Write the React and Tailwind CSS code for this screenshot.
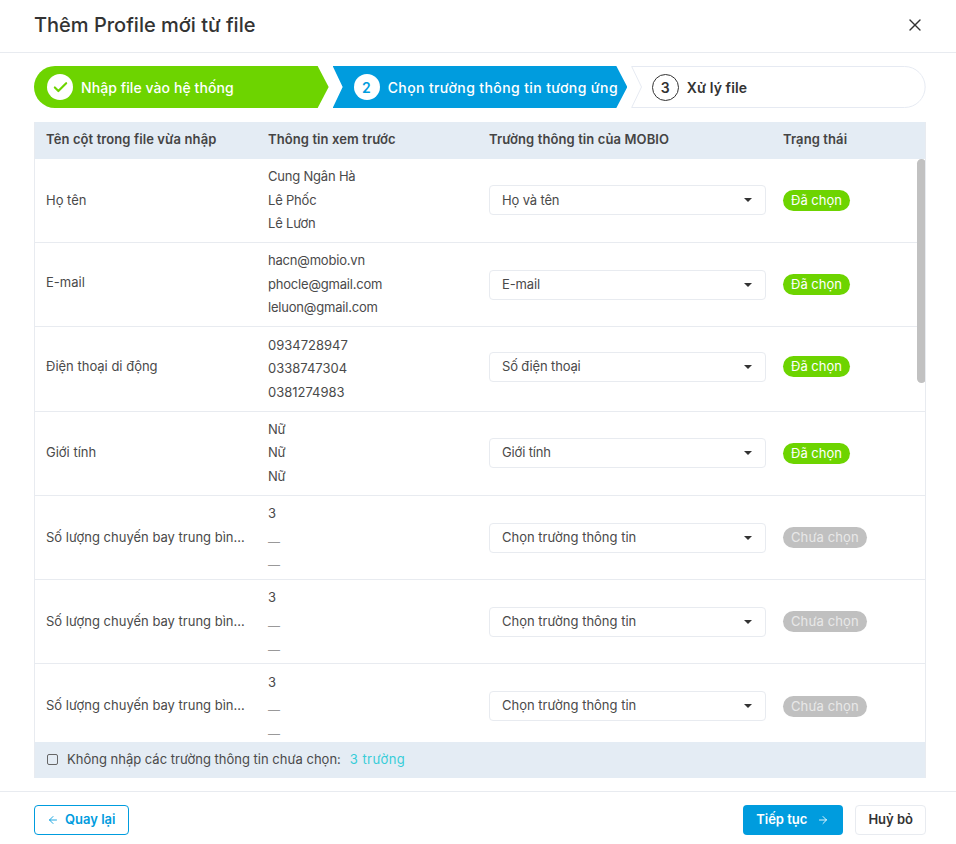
import { ArrowLeft, ArrowRight, Check, X } from 'lucide-react';

const ROWS = [
    { label: 'Họ tên', preview: ['Cung Ngân Hà', 'Lê Phốc', 'Lê Lươn'], field: 'Họ và tên', done: true },
    { label: 'E-mail', preview: ['hacn@mobio.vn', 'phocle@gmail.com', 'leluon@gmail.com'], field: 'E-mail', done: true, labelUp: 'translate-y-[-2px]' },
    { label: 'Điện thoại di động', preview: ['0934728947', '0338747304', '0381274983'], field: 'Số điện thoại', done: true, digits: true, labelUp: 'translate-y-[-2px]', fieldUp: 'translate-y-[-2px]' },
    { label: 'Giới tính', preview: ['Nữ', 'Nữ', 'Nữ'], field: 'Giới tính', done: true },
    { label: 'Số lượng chuyến bay trung bình năm', preview: ['3', '—', '—'], field: 'Chọn trường thông tin', done: false },
    { label: 'Số lượng chuyến bay trung bình quý', preview: ['3', '—', '—'], field: 'Chọn trường thông tin', done: false },
    { label: 'Số lượng chuyến bay trung bình tháng', preview: ['3', '—', '—'], field: 'Chọn trường thông tin', done: false },
];

function StepNumber({ children, outlined }) {
    return (
        <span className={`rounded-full flex items-center justify-center shrink-0 text-[14px] font-semibold ${
            outlined ? 'w-[27px] h-[27px] border border-[#333333] text-[#333333]' : 'w-[26px] h-[26px] bg-white text-[#009cde]'
        }`}>
            {children}
        </span>
    );
}

function Stepper() {
    return (
        <div className="grid grid-cols-3 gap-[4px] h-[42px] text-[14px]">
            <div className="flex items-center gap-[8px] pl-[13px] bg-[#6dd400] text-white font-medium tracking-[0.08px] rounded-l-full [clip-path:polygon(0_0,calc(100%-11px)_0,100%_50%,calc(100%-11px)_100%,0_100%)]">
                <StepNumber><Check size={17} strokeWidth={3} className="text-[#6dd400]" /></StepNumber>
                Nhập file vào hệ thống
            </div>
            <div className="flex items-center gap-[8px] pl-[21px] bg-[#009cde] text-white font-medium whitespace-nowrap tracking-[0.39px] [clip-path:polygon(0_0,calc(100%-11px)_0,100%_50%,calc(100%-11px)_100%,0_100%,10px_50%)]">
                <StepNumber>2</StepNumber>
                Chọn trường thông tin tương ứng
            </div>
            <div className="relative flex items-center gap-[8px] pl-[20.5px] font-semibold tracking-[0.1px] text-[#333333]">
                <svg className="absolute inset-0 w-full h-full" viewBox="0 0 295 42" preserveAspectRatio="none" fill="none">
                    <path d="M0.7 0.5H274a20.5 20.5 0 0 1 0 41H0.7L10.5 21Z" stroke="#e6eaf2" />
                </svg>
                <StepNumber outlined>3</StepNumber>
                Xử lý file
            </div>
        </div>
    );
}

function TableRow({ row }) {
    return (
        <div className="grid grid-cols-[233px_221px_294px_1fr] items-center h-[84.3px] border-b border-[#e8ebf0] text-[13px] text-[#4a4a4a] shrink-0">
            <span className={`pl-[11px] pr-[23px] truncate ${row.labelUp ?? ''}`}>{row.label}</span>
            <div className={`leading-[23.6px] ${row.digits ? '' : 'tracking-[-0.2px]'}`}>
                {row.preview.map((line, i) => (
                    <div key={i} className={line === '—' ? 'translate-y-[4px] text-[12px] text-[#999999]' : ''}>{line}</div>
                ))}
            </div>
            <div className={`flex items-center justify-between w-[277px] h-[30px] pl-[12px] pr-[13px] bg-white border border-[#e8ebf0] rounded-[4px] ${row.done ? 'tracking-[-0.15px]' : ''} ${row.fieldUp ?? ''}`}>
                {row.field}
                <span className="w-0 h-0 border-x-[4px] border-x-transparent border-t-[4px] border-t-[#333333]" />
            </div>
            <div className={row.fieldUp ?? ''}>
                <span className={`inline-block h-[21px] leading-[21px] px-[8px] rounded-full text-[13px] ${
                    row.done ? 'bg-[#6dd400] text-white' : 'bg-[#c0c0c0] text-[#e8e8e8] tracking-[0.1px]'
                }`}>
                    {row.done ? 'Đã chọn' : 'Chưa chọn'}
                </span>
            </div>
        </div>
    );
}

export default function App() {
    return (
        <div className="w-[956px] h-[844px] bg-white flex flex-col font-['Inter',sans-serif] text-[#4a4a4a] overflow-hidden">
            <header className="h-[53px] flex items-center justify-between pl-[34px] pr-[31px] pb-[2px] border-b border-[#e8ebf0] shrink-0">
                <h1 className="text-[20px] font-medium text-[#333333]">Thêm Profile mới từ file</h1>
                <X size={20} strokeWidth={1.6} className="text-[#333333]" />
            </header>

            <main className="flex-1 pl-[34px] pr-[30px] pt-[13px] flex flex-col min-h-0">
                <Stepper />

                <div className="mt-[14px] flex flex-col border-x border-[#e8ebf0]">
                    <div className="grid grid-cols-[233px_221px_294px_1fr] items-center h-[36.7px] pb-[2px] bg-[#e4ecf4] text-[13px] font-semibold tracking-[0.1px] text-[#444444]">
                        <span className="pl-[11px]">Tên cột trong file vừa nhập</span>
                        <span>Thông tin xem trước</span>
                        <span>Trường thông tin của MOBIO</span>
                        <span>Trạng thái</span>
                    </div>

                    <div className="relative h-[583.3px] overflow-hidden flex flex-col">
                        {ROWS.map((row, i) => <TableRow key={i} row={row} />)}
                        <div className="absolute top-0 right-[-1px] w-[9px] h-[224px] rounded-full bg-[#c1c1c1]" />
                    </div>

                    <div className="flex items-center h-[36px] pl-[12px] gap-[9px] bg-[#e4ecf4] text-[13px]">
                        <span className="w-[11px] h-[11px] rounded-[2px] border-[1.5px] border-[#666666]" />
                        <span>Không nhập các trường thông tin chưa chọn:</span>
                        <span className="text-[#37cdd8] tracking-[0.45px]">3 trường</span>
                    </div>
                </div>
            </main>

            <footer className="h-[53px] flex items-start justify-between pl-[34px] pr-[30px] pt-[13px] border-t border-[#e8ebf0] shrink-0 text-[13px] font-semibold">
                <button type="button" className="flex items-center gap-[6px] h-[30px] pl-[12px] pr-[13px] rounded-[4px] border border-[#009cde] text-[#009cde]">
                    <ArrowLeft size={12} strokeWidth={1.75} />
                    Quay lại
                </button>
                <div className="flex gap-[12px]">
                    <button type="button" className="flex items-center gap-[10px] h-[30px] pl-[13.5px] pr-[14px] rounded-[4px] bg-[#009cde] text-white">
                        Tiếp tục
                        <ArrowRight size={12} strokeWidth={1.75} />
                    </button>
                    <button type="button" className="h-[30px] px-[12px] rounded-[4px] border border-[#e8ebf0] text-[#333333]">
                        Huỷ bỏ
                    </button>
                </div>
            </footer>
        </div>
    );
}
